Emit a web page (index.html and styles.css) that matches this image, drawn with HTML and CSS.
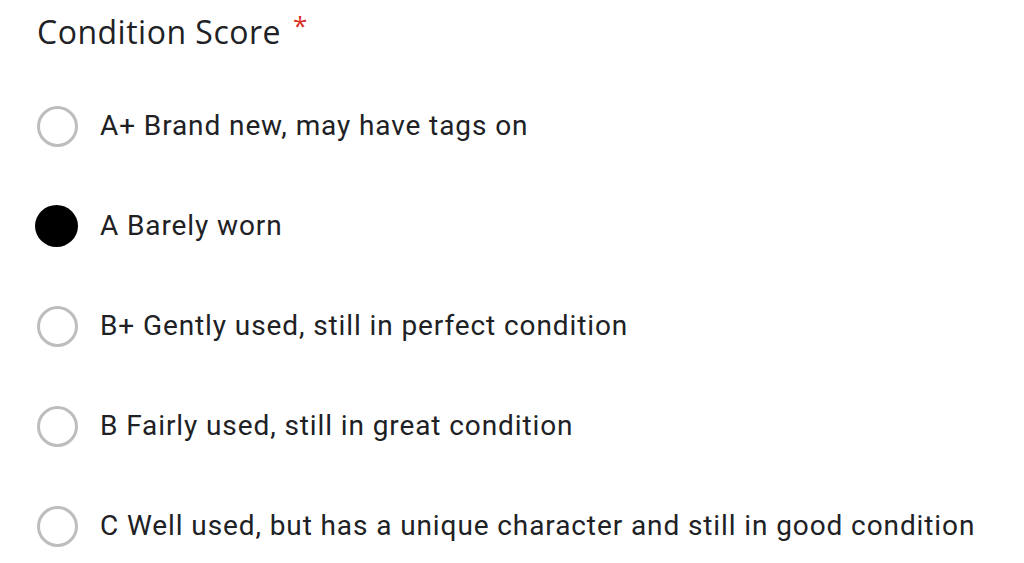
FILE: index.html
```html
<!DOCTYPE html>
<html lang="en">
<head>
	<meta charset="UTF-8">
	<title>Condition Score</title>
	<link rel="stylesheet" href="styles.css">
</head>
<body>
	<div class="question">
		<div class="title">Condition Score<span class="req">*</span></div>
		<ul class="options">
			<li><span class="radio"></span><span class="label">A+ Brand new, may have tags on</span></li>
			<li><span class="radio checked"></span><span class="label">A Barely worn</span></li>
			<li><span class="radio"></span><span class="label">B+ Gently used, still in perfect condition</span></li>
			<li><span class="radio"></span><span class="label">B Fairly used, still in great condition</span></li>
			<li><span class="radio"></span><span class="label">C Well used, but has a unique character and still in good condition</span></li>
		</ul>
	</div>
</body>
</html>
```

FILE: styles.css
```css
*{
	margin: 0;
	padding: 0;
}
body{
	background-color: #fff;
	width: 1024px;
	height: 563px;
	overflow: hidden;
}
.question{
	padding-left: 37px;
	display: flex;
	flex-direction: column;
}
.title{
	height: 76px;
	padding-top: 12px;
	box-sizing: border-box;
	font-family: "Open Sans", sans-serif;
	font-size: 32px;
	line-height: 40px;
	color: #202124;
	letter-spacing: 0.5px;
}
.title .req{
	color: #d93025;
	padding-left: 12px;
	font-size: 26px;
	vertical-align: top;
	position: relative;
	top: -7px;
}
.options{
	list-style: none;
	display: flex;
	flex-direction: column;
}
.options li{
	height: 100px;
	display: flex;
	align-items: center;
}
.radio{
	width: 41px;
	height: 41px;
	box-sizing: border-box;
	border: 3px solid #bdbdbd;
	border-radius: 50%;
	margin-right: 22px;
	flex-shrink: 0;
}
.radio.checked{
	border: none;
	width: 43px;
	height: 42px;
	margin-left: -2px;
	background-color: #000;
}
.label{
	font-family: Roboto, sans-serif;
	font-size: 28px;
	color: #202124;
	letter-spacing: 0.9px;
	position: relative;
	top: -1px;
}
```
